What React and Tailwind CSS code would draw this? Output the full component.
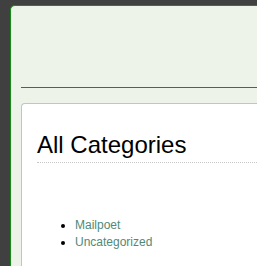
export default function App() {
    const categories = ["Mailpoet", "Uncategorized"];

    return (
        <div className="min-h-[266px] bg-[#404040] pl-[10px] pt-[5px] font-['Liberation_Sans',Arial,sans-serif] overflow-hidden">
            <div className="min-h-[261px] bg-[#edf3e8] border-l border-t border-[#178a17] rounded-tl-[5px] pl-[10px]">
                <div className="h-[82px] border-b border-[#178a17]"></div>
                <div className="mt-[15px] min-h-[163px] bg-white border-l border-t border-[#c4c4c4] rounded-tl-[4px] pl-[15px]">
                    <h1 className="pt-[27px] pb-[3px] text-[24px] leading-[28px] text-black border-b border-dotted border-[#c8c8c8]">
                        All Categories
                    </h1>
                    <ul className="mt-[54px] pl-[38px] list-disc text-[12px] leading-[17px]">
                        {categories.map((c) => (
                            <li key={c}>
                                <a href="#" className="text-[#4f8a78]">{c}</a>
                            </li>
                        ))}
                    </ul>
                </div>
            </div>
        </div>
    );
}
